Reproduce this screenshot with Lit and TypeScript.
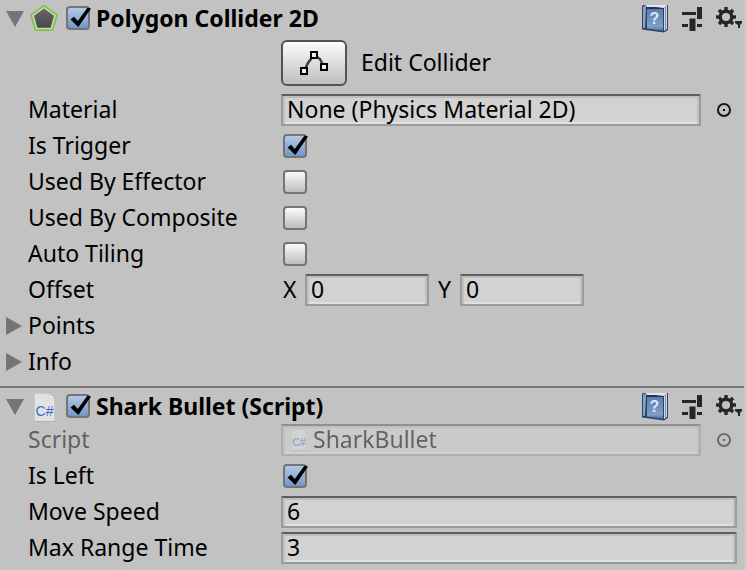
import { LitElement, html, css, svg, nothing } from "lit";
import { customElement, property } from "lit/decorators.js";

const controls = css`
  *, *::before, *::after { box-sizing: border-box; }
  button, input { font: inherit; color: inherit; margin: 0; }
  button { padding: 0; border: 0; background: none; display: flex; align-items: center; }
  svg { display: block; flex: none; }
`;

@customElement("tick-box")
class TickBox extends LitElement {
  static styles = [controls, css`
    :host { display: block; flex: none; width: 24px; height: 24px; }
    .wrap { position: relative; display: block; width: 24px; height: 24px; }
    .box {
      appearance: none; display: block; width: 24px; height: 24px;
      border: 2px solid #747474; border-radius: 4px;
      background: linear-gradient(#fbfbfb, #bfbdbd);
    }
    .box:checked { background: linear-gradient(#b4c9e4, #7397c9); }
    .mark { position: absolute; left: 0; top: 0; overflow: visible; pointer-events: none; visibility: hidden; }
    .box:checked + .mark { visibility: visible; }
  `];
  @property() name = "";
  @property({ type: Boolean }) on = false;
  render() {
    return html`<span class="wrap">
      <input class="box" type="checkbox" aria-label=${this.name} .checked=${this.on} />
      <svg class="mark" width="24" height="24" viewBox="0 0 24 24"><path d="M4.5 13.5L8 10.8L11.8 15L21.5 1.5L25 2.5L12.3 21Z" /></svg>
    </span>`;
  }
}

const pentagon = html`<svg width="28" height="28" viewBox="0 1 28 28">
  <defs><linearGradient id="pg" x1="0" y1="0" x2="0" y2="1"><stop offset="0" stop-color="#666" /><stop offset="1" stop-color="#484848" /></linearGradient></defs>
  <path d="M14 1.6L27 11L22.4 26.2H5.6L1 11Z" fill="#d2d2d2" stroke="#76c832" stroke-width="1.7" />
  <path d="M14 4.4L24 11.8L20.6 23.8H7.4L4 11.8Z" fill="url(#pg)" />
</svg>`;

const scriptIcon = (w: number, h: number) => html`<svg width=${w} height=${h} viewBox="0 0 21 29">
  <path d="M0 0H16L21 5V29H0Z" fill="#b0b3b5" /><path d="M.5 .5H15.8L20.5 5.2V28H.5Z" fill="#dfe3e6" />
  <path d="M15.5 .5V5.5H20.5Z" fill="#f8f9fa" stroke="#b9bdc0" stroke-width=".6" />
  <text x="10.5" y="22.5" font-family="Liberation Sans, sans-serif" font-size="14" text-anchor="middle" fill="#3c6cc4">C#</text>
</svg>`;

const book = html`<svg width="28" height="29" viewBox="0 1 28 29">
  <defs><linearGradient id="bk" x1="0" y1="0" x2="0" y2="1"><stop offset="0" stop-color="#5d7da6" /><stop offset=".8" stop-color="#7d9fc8" /><stop offset="1" stop-color="#4a6a96" /></linearGradient></defs>
  <path d="M2 2L5 0H28V26L24 28.5L2 25.5Z" fill="#2c4268" />
  <path d="M3 3L6 1V4L5 24L3 24Z" fill="#8aa3c2" />
  <path d="M6 1H27L24 4H7Z" fill="#dfe6ee" />
  <path d="M6 3H16L24 4V6H6Z" fill="#1f355a" />
  <path d="M24 4L27 1V25L24 27Z" fill="#ccd5e0" />
  <path d="M25.5 3V26" stroke="#7487a3" stroke-width=".8" />
  <path d="M7 5H23V27L7 24.5Z" fill="url(#bk)" />
  <text x="14.5" y="20" font-family="Liberation Sans, sans-serif" font-weight="bold" font-size="16" text-anchor="middle" fill="#dbe8f8">?</text>
</svg>`;

const sliders = html`<svg width="20" height="25" viewBox="0 1 20 25" fill="#262626">
  <path d="M0 6H14V9H0ZM15 1H20V13H15ZM0 18H6V21H0ZM7.5 12.500H13.500V25H7.5ZM15 18H20V21H15Z" />
</svg>`;

const gear = html`<svg width="28" height="28" viewBox="0 0 28 28" fill="none" stroke="#262626">
  <circle cx="10" cy="12" r="5.8" stroke-width="3.4" />
  ${[0, 45, 90, 135, 180, 225, 270, 315].map((a) => svg`<path d="M10 2V6" stroke-width="3.4" transform="rotate(${a} 10 12)" />`)}
  <path d="M19 16H26V18L24 20V23H22V20L19 18Z" fill="#262626" stroke="none" />
</svg>`;

const target = html`<svg width="16" height="16" viewBox="0 0 16 16">
  <circle cx="8" cy="8" r="6" fill="none" stroke="#161616" stroke-width="2" /><rect x="7" y="7" width="2" height="2" />
</svg>`;

const arrow = (open: boolean) => open
  ? html`<svg width="18" height="16" viewBox="0 0 18 16"><path d="M0 0H18L9 16Z" fill="#757575" /></svg>`
  : html`<svg width="16" height="18" viewBox="0 0 16 18"><path d="M0 0L16 9L0 18Z" fill="#757575" /></svg>`;

@customElement("app-root")
class AppRoot extends LitElement {
  static styles = [controls, css`
    :host {
      display: block; min-height: 100vh; background: #c2c2c2; color: #000;
      border-right: 2px solid #cacaca; box-sizing: border-box;
      font: 23px/28px "Noto Sans", "Open Sans", sans-serif;
    }
    .panel + .panel { border-top: 2px solid #757575; }
    .panel { padding-bottom: 6px; }
    .head { display: flex; align-items: center; height: 34px; padding: 4px 0 0 6px; }
    .head tick-box { margin-bottom: 2px; }
    .kind { display: flex; justify-content: center; width: 28px; margin: 0 8px 0 6px; }
    .title { flex: 1; margin: 0 0 0 6px; padding-bottom: 2px; font-size: 23px; line-height: 28px; font-weight: 700; white-space: nowrap; }
    .tools { display: flex; align-items: center; gap: 14px; }
    .row { display: grid; grid-template-columns: 253px 1fr; align-items: center; height: 36px; padding: 0 7px 0 28px; }
    .row.edit { height: 58px; }
    .label { padding-bottom: 2px; white-space: nowrap; }
    .value { display: flex; align-items: center; min-width: 0; }
    .tick { padding-left: 2px; }
    .draw {
      justify-content: center; width: 66px; height: 46px; margin-right: 14px;
      border: 2px solid #535353; border-radius: 6px; background: linear-gradient(#fcfcfc, #bdbdbd);
    }
    .field {
      display: block; flex: 1; min-width: 0; width: 100%; height: 32px; padding: 0 4px 2px; border: 2px solid #9b9b9b;
      border-top-color: #5e5e5e; border-radius: 0; background: #d2d2d2; text-align: left; white-space: nowrap;
      box-shadow: inset 0 2px #bebebe, inset 2px 0 #c0c0c0, inset -2px 0 #c0c0c0, inset 0 -2px #e0e0e0;
    }
    .object { display: flex; align-items: center; gap: 6px; }
    .script { padding-left: 8px; }
    .script svg { margin-top: 2px; }
    .pick { margin: 0 5px 0 15px; }
    .off .label, .off .value { opacity: 0.5; }
    .pair { display: flex; align-items: center; width: 146px; margin-right: 9px; }
    .axis { width: 22px; }
    .pairs { padding-left: 2px; }
    .fold { gap: 6px; height: 36px; padding-left: 6px; }
  `];

  head(icon: unknown, title: string) {
    return html`<header class="head">
      <button aria-label="Collapse ${title}">${arrow(true)}</button>
      <span class="kind">${icon}</span>
      <tick-box name=${title} on></tick-box>
      <h2 class="title">${title}</h2>
      <div class="tools">
        <button aria-label="Help">${book}</button>
        <button aria-label="Presets">${sliders}</button>
        <button aria-label="Settings">${gear}</button>
      </div>
    </header>`;
  }

  check(name: string, on = false) {
    return html`<div class="row"><span class="label">${name}</span><div class="value tick"><tick-box name=${name} ?on=${on}></tick-box></div></div>`;
  }

  object(name: string, text: string, icon: unknown = nothing, off = false) {
    return html`<div class="row ${off ? "off" : ""}">
      <span class="label">${name}</span>
      <div class="value">
        <button class="field object ${off ? "script" : ""}" aria-label=${name} ?disabled=${off}>${icon}${text}</button>
        <button class="pick" aria-label="Select ${name}" ?disabled=${off}>${target}</button>
      </div>
    </div>`;
  }

  number(name: string, value: string) {
    return html`<div class="row"><label class="label" for=${name}>${name}</label>
      <div class="value"><input class="field" id=${name} .value=${value} /></div></div>`;
  }

  render() {
    return html`
      <section class="panel">
        ${this.head(pentagon, "Polygon Collider 2D")}
        <div class="row edit"><span></span><div class="value">
          <button class="draw" id="edit" aria-label="Edit Collider">
            <svg width="28" height="24" viewBox="0 0 28 24" fill="none" stroke="#000">
              <path d="M4 20L8 12L14 4L20 8L24 16" stroke="#3a3a3a" stroke-width="2.4" />
              <path d="M1 17H7V23H1ZM11 1H17V7H11ZM21 13H27V19H21Z" fill="#eee" stroke-width="2" />
            </svg>
          </button>
          <label class="label" for="edit">Edit Collider</label>
        </div></div>
        ${this.object("Material", "None (Physics Material 2D)")}
        ${this.check("Is Trigger", true)}
        ${this.check("Used By Effector")}
        ${this.check("Used By Composite")}
        ${this.check("Auto Tiling")}
        <div class="row"><span class="label">Offset</span><div class="value pairs">
          ${["X", "Y"].map((a) => html`<div class="pair"><label class="axis label" for=${a}>${a}</label><input class="field" id=${a} .value=${"0"} /></div>`)}
        </div></div>
        ${["Points", "Info"].map((n) => html`<button class="fold" aria-expanded="false">${arrow(false)}<span class="label">${n}</span></button>`)}
      </section>
      <section class="panel">
        ${this.head(scriptIcon(21, 29), "Shark Bullet (Script)")}
        ${this.object("Script", "SharkBullet", scriptIcon(16, 22), true)}
        ${this.check("Is Left", true)}
        ${this.number("Move Speed", "6")}
        ${this.number("Max Range Time", "3")}
      </section>`;
  }
}
